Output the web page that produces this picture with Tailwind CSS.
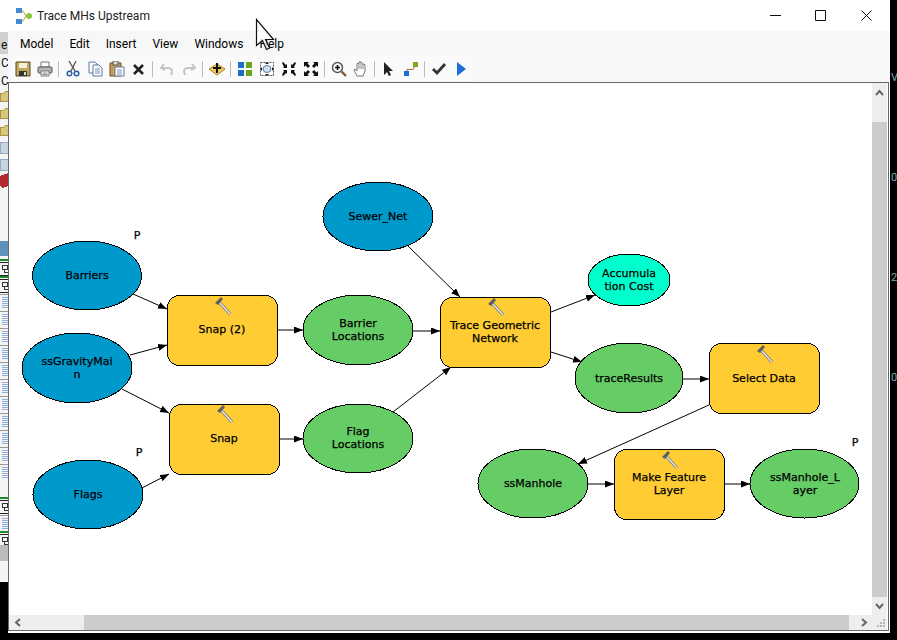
<!DOCTYPE html>
<html lang="en">
<head>
    <meta charset="UTF-8">
    <title>Trace MHs Upstream</title>
    <script src="https://cdn.jsdelivr.net/npm/@tailwindcss/browser@4"></script>
</head>
<body class="bg-black w-[897px] h-[640px] overflow-hidden relative font-['Roboto',sans-serif]">
    <div class="flex h-[633px]">
        <!-- bits of the app behind the window -->
        <div class="w-[8px] h-[582px] shrink-0 bg-[#f4f4f4] overflow-hidden">
            <svg width="8" height="582" viewBox="0 0 8 582" shape-rendering="crispEdges">
                <defs>
                    <g id="folder"><path d="M0 3h4l2-2h2v10H0z" fill="#d9c777" stroke="#a8954a"/></g>
                    <g id="db"><path d="M0 1h8v11H0z" fill="#c5d3e2" stroke="#9aa8b8"/></g>
                    <g id="tbl"><path d="M0 0h8" stroke="#1a8a2a" stroke-width="2"/><path d="M0 2h8" stroke="#222"/><path d="M2 5h5v4H2zM4 9v3h4" fill="none" stroke="#333"/><path d="M0 15h8" stroke="#222"/></g>
                    <g id="doc"><path d="M0 0h8" stroke="#999"/><path d="M2 3h6M2 5h6M2 7h6M2 9h6M2 11h6M2 13h6" stroke="#8fb0de"/></g>
                </defs>
                <rect width="8" height="32" fill="#fff"/>
                <rect y="32" width="8" height="22" fill="#cfcfcf"/>
                <text x="1" y="49" font-size="12" fill="#111">e</text>
                <text x="1" y="67" font-size="12" fill="#111">C</text>
                <text x="1" y="85" font-size="12" fill="#111">C</text>
                <use href="#folder" y="90"/><use href="#folder" y="107"/><use href="#folder" y="124"/>
                <use href="#db" y="141"/><use href="#db" y="158"/>
                <path d="M0 176l8-3v13l-5 2-3-2z" fill="#b3282d"/>
                <rect y="241" width="8" height="15" fill="#5b94b8"/>
                <use href="#tbl" y="260"/><use href="#tbl" y="277"/>
                <use href="#doc" y="294"/><use href="#doc" y="311"/><use href="#doc" y="328"/><use href="#doc" y="345"/><use href="#doc" y="362"/><use href="#doc" y="379"/><use href="#doc" y="396"/><use href="#doc" y="413"/><use href="#doc" y="430"/><use href="#doc" y="447"/><use href="#doc" y="464"/>
                <use href="#tbl" y="498"/><use href="#doc" y="515"/><use href="#tbl" y="532"/>
                <rect y="545" width="8" height="16" fill="#bcbcbc"/>
            </svg>
        </div>

        <!-- model builder window -->
        <div class="w-[882px] h-[633px] shrink-0 bg-white flex flex-col">
            <div class="h-[31px] flex items-center shrink-0">
                <svg class="ml-[8px]" width="16" height="16" viewBox="0 0 16 16">
                    <path d="M3 3h4l3 5-3 5H3" fill="none" stroke="#c9a227"/>
                    <rect x="0" y="0" width="6" height="5" fill="#3f8fd0"/><rect x="0" y="11" width="6" height="5" fill="#3f8fd0"/>
                    <circle cx="13" cy="8" r="3" fill="#8cc63f"/>
                </svg>
                <span class="ml-[5px] text-[12px] text-[#222]">Trace MHs Upstream</span>
                <div class="ml-auto flex items-center">
                    <svg class="mr-[34px]" width="11" height="11" viewBox="0 0 11 11"><path d="M0 5.500h11" stroke="#111"/></svg>
                    <svg class="mr-[35px]" width="11" height="11" viewBox="0 0 11 11"><path d="M.5.5h10v10H.5z" fill="none" stroke="#111"/></svg>
                    <svg class="mr-[18px]" width="11" height="11" viewBox="0 0 11 11"><path d="M.5.5l10 10M10.500.5l-10 10" stroke="#111"/></svg>
                </div>
            </div>
            <div class="h-[25px] bg-[#f7f7f7] flex items-center shrink-0 pl-[12px] gap-[16px] text-[12px] text-black">
                <span>Model</span><span>Edit</span><span>Insert</span><span>View</span><span>Windows</span><span>Help</span>
            </div>
            <div class="h-[26px] bg-[#f7f7f7] shrink-0 pl-[3px]">
                <div class="h-[25px] w-[462px] pl-px bg-[#fafafa] rounded-[3px] flex items-center">
                    <button class="w-[22px] flex justify-center">
                        <svg width="16" height="16" viewBox="0 0 16 16"><path d="M1 1h14v14H1z" fill="#c2a85c" stroke="#5c4a1e"/><rect x="4" y="2" width="8" height="5" fill="#f5f0dc"/><rect x="4" y="10" width="8" height="5" fill="#333"/><rect x="9" y="11" width="2" height="3" fill="#ddd"/></svg>
                    </button>
                    <button class="w-[22px] flex justify-center">
                        <svg width="16" height="16" viewBox="0 0 16 16"><path d="M4 1h8v5H4z" fill="#fff" stroke="#777"/><rect x="1" y="6" width="14" height="6" rx="1" fill="#b5b5b5" stroke="#555"/><path d="M4 10h8v5H4z" fill="#fff" stroke="#777"/><path d="M5.500 12h5M5.500 13.500h5" stroke="#888"/></svg>
                    </button>
                    <div class="w-[6px] h-[16px] pl-[2px]"><div class="w-px h-full bg-[#bbb]"></div></div>
                    <button class="w-[22px] flex justify-center">
                        <svg width="16" height="16" viewBox="0 0 16 16"><path d="M4 0l6 10M11 0L6 10" stroke="#555" stroke-width="1.300"/><circle cx="4.500" cy="12.500" r="2.300" fill="none" stroke="#2a5fa8" stroke-width="1.500"/><circle cx="11.500" cy="12.500" r="2.300" fill="none" stroke="#2a5fa8" stroke-width="1.500"/></svg>
                    </button>
                    <button class="w-[22px] flex justify-center">
                        <svg width="16" height="16" viewBox="0 0 16 16"><path d="M2 1h6l2 2v9H2z" fill="#fff" stroke="#5b7a9e"/><path d="M6 4h6l3 3v8H6z" fill="#fff" stroke="#5b7a9e"/><path d="M8 8h5M8 10h5M8 12h5" stroke="#7d94ae"/></svg>
                    </button>
                    <button class="w-[22px] flex justify-center">
                        <svg width="16" height="16" viewBox="0 0 16 16"><path d="M1 2h11v13H1z" fill="#c99a5a" stroke="#6b4a20"/><rect x="4" y="0" width="5" height="4" fill="#ddd" stroke="#555"/><path d="M6 6h9v9H6z" fill="#fff" stroke="#5b7a9e"/><path d="M8 9h5M8 11h5M8 13h5" stroke="#7d94ae"/></svg>
                    </button>
                    <button class="w-[22px] flex justify-center">
                        <svg width="16" height="16" viewBox="0 0 16 16"><path d="M3 4l9 9M12 4l-9 9" stroke="#222" stroke-width="2.600"/></svg>
                    </button>
                    <div class="w-[6px] h-[16px] pl-[2px]"><div class="w-px h-full bg-[#bbb]"></div></div>
                    <button class="w-[22px] flex justify-center">
                        <svg width="16" height="16" viewBox="0 0 16 16"><path d="M5 3L2 7l4 2M3 7h6c4 0 5 3 3 7" fill="none" stroke="#c4c4c4" stroke-width="2"/></svg>
                    </button>
                    <button class="w-[22px] flex justify-center">
                        <svg width="16" height="16" viewBox="0 0 16 16"><path d="M11 3l3 4-4 2M13 7H7c-4 0-5 3-3 7" fill="none" stroke="#c4c4c4" stroke-width="2"/></svg>
                    </button>
                    <div class="w-[6px] h-[16px] pl-[2px]"><div class="w-px h-full bg-[#bbb]"></div></div>
                    <button class="w-[22px] flex justify-center">
                        <svg width="16" height="16" viewBox="0 0 16 16"><path d="M0 8l8-5 8 5-8 6z" fill="#f0c860" stroke="#a8842c"/><path d="M8 2v10M4 7h8" stroke="#111" stroke-width="2"/></svg>
                    </button>
                    <div class="w-[6px] h-[16px] pl-[2px]"><div class="w-px h-full bg-[#bbb]"></div></div>
                    <button class="w-[22px] flex justify-center">
                        <svg width="16" height="16" viewBox="0 0 16 16"><rect x="1" y="1" width="6" height="6" fill="#1c6fc4"/><rect x="9" y="1" width="6" height="6" fill="#6aa51e"/><rect x="1" y="9" width="6" height="6" fill="#1c6fc4"/><rect x="9" y="9" width="6" height="6" fill="#6aa51e"/></svg>
                    </button>
                    <button class="w-[22px] flex justify-center">
                        <svg width="16" height="16" viewBox="0 0 16 16"><rect x="1.500" y="1.500" width="13" height="13" fill="#fff" stroke="#555" stroke-dasharray="2 1"/><ellipse cx="8" cy="8" rx="4" ry="3.500" fill="#cfe0f2" stroke="#5b7a9e"/><path d="M8 1l-2 2h4zM8 15l-2-2h4zM1 8l2-2v4zM15 8l-2-2v4z" fill="#222"/></svg>
                    </button>
                    <button class="w-[22px] flex justify-center">
                        <svg width="16" height="16" viewBox="0 0 16 16"><path d="M1 2l1-1 3 3 1-1v4H2l1-1zM15 2l-1-1-3 3-1-1v4h4l-1-1zM1 14l1 1 3-3 1 1V9H2l1 1zM15 14l-1 1-3-3-1 1V9h4l-1 1z" fill="#111"/></svg>
                    </button>
                    <button class="w-[22px] flex justify-center">
                        <svg width="16" height="16" viewBox="0 0 16 16"><path d="M1 1h5L4.500 2.500 7 5 5 7 2.500 4.500 1 6zM15 1h-5l1.500 1.500L9 5l2 2 2.500-2.500L15 6zM1 15h5l-1.500-1.500L7 11 5 9l-2.500 2.500L1 10zM15 15h-5l1.500-1.500L9 11l2-2 2.500 2.500L15 10z" fill="#111"/></svg>
                    </button>
                    <div class="w-[6px] h-[16px] pl-[2px]"><div class="w-px h-full bg-[#bbb]"></div></div>
                    <button class="w-[22px] flex justify-center">
                        <svg width="16" height="16" viewBox="0 0 16 16"><circle cx="6.500" cy="6.500" r="5" fill="#fff" stroke="#555" stroke-width="1.500"/><path d="M4 6.500h5M6.500 4v5" stroke="#111" stroke-width="1.600"/><path d="M10.500 10.500l4.500 4.500" stroke="#7a5a34" stroke-width="2.400"/></svg>
                    </button>
                    <button class="w-[22px] flex justify-center">
                        <svg width="16" height="16" viewBox="0 0 16 16"><path d="M4 15L1 9l1-1 2 2V3l1-1 1 1v-2l1-.5 1 .5v1l1-.5 1 1v1l1-.5 1 1v6l-2 5z" fill="#fff" stroke="#777"/><path d="M6 3v5M8 2v6M10 3v5" stroke="#888"/></svg>
                    </button>
                    <div class="w-[6px] h-[16px] pl-[2px]"><div class="w-px h-full bg-[#bbb]"></div></div>
                    <button class="w-[22px] flex justify-center">
                        <svg width="16" height="16" viewBox="0 0 16 16"><path d="M3 1v13l3-3 2 4 2-1-2-4h4z" fill="#222"/></svg>
                    </button>
                    <button class="w-[22px] flex justify-center">
                        <svg width="16" height="16" viewBox="0 0 16 16"><path d="M4 11V8.500h6L12 5" fill="none" stroke="#b5653a"/><rect x="1" y="10" width="5" height="5" fill="#1c6fe0"/><rect x="10" y="1" width="5" height="5" fill="#7ea81e"/></svg>
                    </button>
                    <div class="w-[6px] h-[16px] pl-[2px]"><div class="w-px h-full bg-[#bbb]"></div></div>
                    <button class="w-[22px] flex justify-center">
                        <svg width="16" height="16" viewBox="0 0 16 16"><path d="M2 8l4 4 8-9" fill="none" stroke="#333" stroke-width="2.800"/></svg>
                    </button>
                    <button class="w-[22px] flex justify-center">
                        <svg width="16" height="16" viewBox="0 0 16 16"><path d="M4 1l9 7-9 7z" fill="#1c6fd0"/></svg>
                    </button>
                </div>
            </div>

            <!-- canvas with scrollbars -->
            <div class="w-[881px] h-[549px] border border-[#696969] grid grid-cols-[863px_16px] grid-rows-[532px_15px] bg-white">
                <svg class="block" width="863" height="532" viewBox="9 83 863 532" font-family="'DejaVu Sans',sans-serif" font-size="11">
                    <defs>
                        <marker id="head" markerUnits="userSpaceOnUse" markerWidth="10" markerHeight="8" refX="9" refY="3.500" orient="auto">
                            <path d="M0 0l9 3.500-9 3.500z" fill="#000"/>
                        </marker>
                        <g id="hammer">
                            <path d="M4 5l11 12" stroke="#777" stroke-width="3"/><path d="M4 5l11 12" stroke="#e8e8e8" stroke-width="1.500"/>
                            <path d="M0 6l6-6 2 2-5 6z" fill="#5c5e62"/>
                        </g>
                    </defs>

                    <g stroke="#000" fill="none">
                        <path d="M133 294L167 309" marker-end="url(#head)"/>
                        <path d="M130 355L167 345" marker-end="url(#head)"/>
                        <path d="M122 389L169 413" marker-end="url(#head)"/>
                        <path d="M140 489L169 474" marker-end="url(#head)"/>
                        <path d="M277 330L303 330" marker-end="url(#head)"/>
                        <path d="M279 439L303 439" marker-end="url(#head)"/>
                        <path d="M413 331L440 331" marker-end="url(#head)"/>
                        <path d="M393 412L451 367" marker-end="url(#head)"/>
                        <path d="M408 246L460 297" marker-end="url(#head)"/>
                        <path d="M551 312L595 295" marker-end="url(#head)"/>
                        <path d="M551 352L582 362" marker-end="url(#head)"/>
                        <path d="M683 379L709 379" marker-end="url(#head)"/>
                        <path d="M709 405L578 464" marker-end="url(#head)"/>
                        <path d="M588 484L614 484" marker-end="url(#head)"/>
                        <path d="M724 484L750 484" marker-end="url(#head)"/>
                    </g>

                    <g stroke="#000" shape-rendering="crispEdges">
                        <ellipse cx="87" cy="275.500" rx="54.500" ry="34.500" fill="#0099cc"/>
                        <ellipse cx="77" cy="368" rx="55" ry="35" fill="#0099cc"/>
                        <ellipse cx="88" cy="494.500" rx="55" ry="34.500" fill="#0099cc"/>
                        <ellipse cx="378" cy="216.500" rx="55" ry="34.500" fill="#0099cc"/>
                        <ellipse cx="358" cy="330" rx="55" ry="35" fill="#66cc66"/>
                        <ellipse cx="358" cy="438.500" rx="55" ry="34.500" fill="#66cc66"/>
                        <ellipse cx="629" cy="280" rx="41" ry="26" fill="#00ffcc"/>
                        <ellipse cx="629" cy="378" rx="54" ry="35" fill="#66cc66"/>
                        <ellipse cx="533" cy="483.500" rx="55" ry="34.500" fill="#66cc66"/>
                        <ellipse cx="804.500" cy="483.500" rx="54.500" ry="34.500" fill="#66cc66"/>
                        <rect x="167.500" y="295.500" width="110" height="70" rx="12" fill="#ffcc33"/>
                        <rect x="169.500" y="404.500" width="110" height="70" rx="12" fill="#ffcc33"/>
                        <rect x="440.500" y="297.500" width="110" height="70" rx="12" fill="#ffcc33"/>
                        <rect x="709.500" y="343.500" width="110" height="70" rx="12" fill="#ffcc33"/>
                        <rect x="614.500" y="449.500" width="110" height="70" rx="12" fill="#ffcc33"/>
                    </g>

                    <use href="#hammer" x="215" y="297"/>
                    <use href="#hammer" x="217" y="405"/>
                    <use href="#hammer" x="488" y="298"/>
                    <use href="#hammer" x="757" y="345"/>
                    <use href="#hammer" x="662" y="451"/>

                    <g transform="translate(0 -1)" text-anchor="middle" fill="#000" stroke="#000" stroke-width="0.250">
                        <text x="87" y="280">Barriers</text>
                        <text x="77" y="366">ssGravityMai</text><text x="77" y="379">n</text>
                        <text x="88" y="499">Flags</text>
                        <text x="378" y="221">Sewer_Net</text>
                        <text x="358" y="328">Barrier</text><text x="358" y="341">Locations</text>
                        <text x="358" y="436">Flag</text><text x="358" y="449">Locations</text>
                        <text x="629" y="278">Accumula</text><text x="629" y="291">tion Cost</text>
                        <text x="629" y="383">traceResults</text>
                        <text x="533" y="488">ssManhole</text>
                        <text x="805" y="482">ssManhole_L</text><text x="805" y="495">ayer</text>
                        <text x="222" y="334">Snap (2)</text>
                        <text x="224" y="443">Snap</text>
                        <text x="495" y="330">Trace Geometric</text><text x="495" y="343">Network</text>
                        <text x="764" y="383">Select Data</text>
                        <text x="669" y="482">Make Feature</text><text x="669" y="495">Layer</text>
                        <text x="137" y="240">P</text>
                        <text x="139" y="457">P</text>
                        <text x="855" y="447">P</text>
                    </g>
                </svg>

                <!-- vertical scrollbar -->
                <div class="flex flex-col bg-[#eeeeee] w-[15px]">
                    <div class="h-[39px] flex justify-center pt-[6px]">
                        <svg width="9" height="7" viewBox="0 0 9 7"><path d="M1 6l3.500-4L8 6" fill="none" stroke="#666" stroke-width="2"/></svg>
                    </div>
                    <div class="h-[475px] bg-[#cccccc]"></div>
                    <div class="flex-1 flex justify-center pt-[6px]">
                        <svg width="9" height="7" viewBox="0 0 9 7"><path d="M1 1l3.500 4L8 1" fill="none" stroke="#666" stroke-width="2"/></svg>
                    </div>
                </div>

                <!-- horizontal scrollbar -->
                <div class="flex bg-[#eeeeee] h-[15px]">
                    <div class="w-[75px] flex items-center pl-[5px]">
                        <svg width="7" height="9" viewBox="0 0 7 9"><path d="M6 1L2 4.500 6 8" fill="none" stroke="#666" stroke-width="2"/></svg>
                    </div>
                    <div class="w-[765px] bg-[#cccccc]"></div>
                    <div class="flex-1 flex items-center justify-end pr-[4px]">
                        <svg width="7" height="9" viewBox="0 0 7 9"><path d="M1 1l4 3.500L1 8" fill="none" stroke="#666" stroke-width="2"/></svg>
                    </div>
                </div>
                <div class="bg-[#eeeeee] w-[15px] h-[15px]">
                    <svg width="15" height="15" viewBox="0 0 15 15"><path d="M11 4h2v2h-2zM8 7h2v2H8zM11 7h2v2h-2zM5 10h2v2H5zM8 10h2v2H8zM11 10h2v2h-2z" fill="#b5b5b5"/></svg>
                </div>
            </div>
        </div>

        <!-- desktop glyphs peeking out on the right -->
        <div class="w-[7px] h-[400px] text-[11px] text-[#7aa8a0] leading-none overflow-hidden pl-px">
            <div class="mt-[72px] h-[100px]">V</div>
            <div class="h-[100px]">0</div>
            <div class="h-[100px]">2</div>
            <div>0</div>
        </div>
    </div>

    <!-- mouse pointer over the window -->
    <svg class="absolute left-[255px] top-[18px]" width="24" height="34" viewBox="0 0 24 34">
        <path d="M1.500 1.500v26l6-5 4 9 3-1.500-4-8.500h8z" fill="#fff" fill-opacity="0.8" stroke="#111" stroke-width="1.200"/>
    </svg>
</body>
</html>
